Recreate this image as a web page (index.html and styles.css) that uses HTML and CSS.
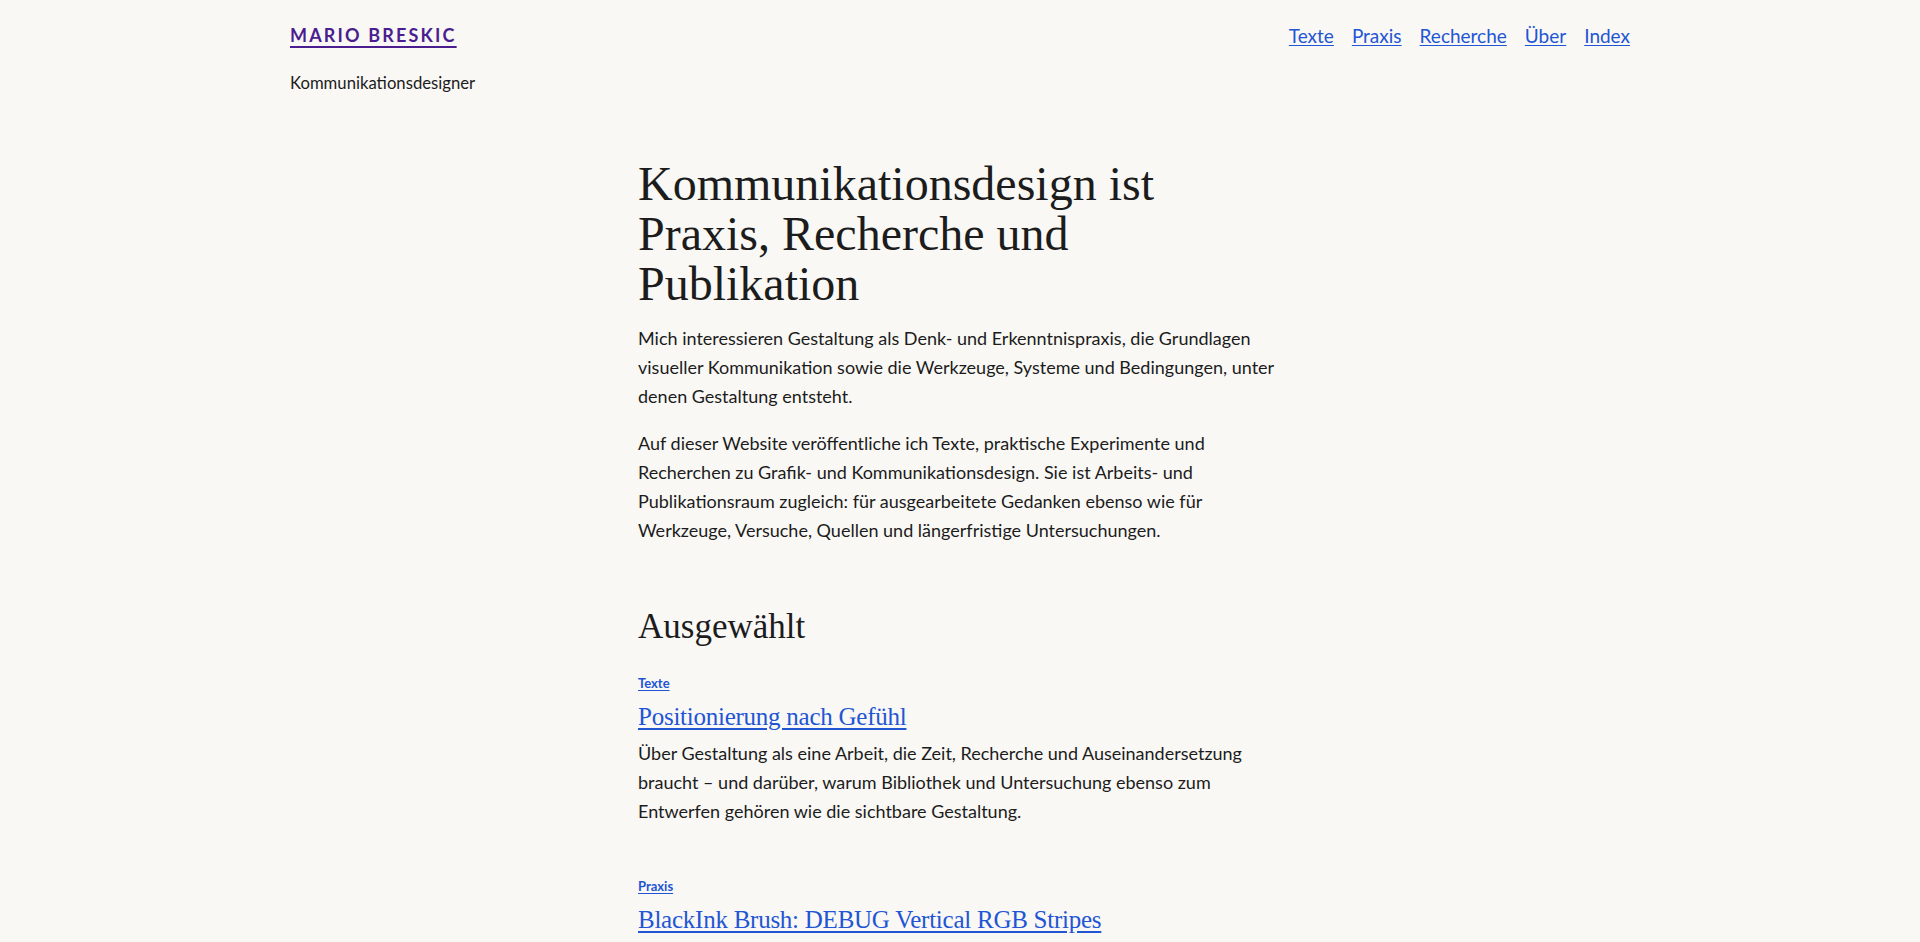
FILE: index.html
```html
<!DOCTYPE html>
<html lang="de">
<head>
<meta charset="utf-8">
<title>Mario Breskic – Kommunikationsdesigner</title>
<link rel="stylesheet" href="styles.css">
</head>
<body>
<header class="site-header">
  <div class="brand">
    <a class="logo" href="#">Mario Breskic</a>
    <p class="tagline">Kommunikationsdesigner</p>
  </div>
  <nav class="main-nav">
    <a href="#">Texte</a>
    <a href="#">Praxis</a>
    <a href="#">Recherche</a>
    <a href="#">Über</a>
    <a href="#">Index</a>
  </nav>
</header>
<main class="content">
  <h1 class="hero-title">Kommunikationsdesign ist Praxis, Recherche und Publikation</h1>
  <p class="text">Mich interessieren Gestaltung als Denk- und Erkenntnispraxis, die Grundlagen visueller Kommunikation sowie die Werkzeuge, Systeme und Bedingungen, unter denen Gestaltung entsteht.</p>
  <p class="text">Auf dieser Website veröffentliche ich Texte, praktische Experimente und Recherchen zu Grafik- und Kommunikationsdesign. Sie ist Arbeits- und Publikationsraum zugleich: für ausgearbeitete Gedanken ebenso wie für Werkzeuge, Versuche, Quellen und längerfristige Untersuchungen.</p>
  <h2 class="section-title">Ausgewählt</h2>
  <article class="entry">
    <a class="entry-cat" href="#">Texte</a>
    <h3 class="entry-title"><a href="#">Positionierung nach Gefühl</a></h3>
    <p class="text entry-desc">Über Gestaltung als eine Arbeit, die Zeit, Recherche und Auseinandersetzung braucht – und darüber, warum Bibliothek und Untersuchung ebenso zum Entwerfen gehören wie die sichtbare Gestaltung.</p>
  </article>
  <article class="entry">
    <a class="entry-cat" href="#">Praxis</a>
    <h3 class="entry-title"><a href="#">BlackInk Brush: DEBUG Vertical RGB Stripes</a></h3>
  </article>
</main>
</body>
</html>
```
FILE: styles.css
```css
html, body {
  margin: 0;
  padding: 0;
}
body {
  background: #f9f8f5;
  color: #1c1c1c;
  font-family: Lato, "Open Sans", sans-serif;
  font-size: 18px;
}
a {
  color: #2255d4;
}
.site-header {
  width: 1340px;
  margin: 0 auto;
  padding-top: 24px;
  display: flex;
  justify-content: space-between;
  align-items: flex-start;
}
.brand {
  display: flex;
  flex-direction: column;
  align-items: flex-start;
  padding-top: 1px;
}
.logo {
  color: #4b1d8f;
  font-weight: 700;
  font-size: 18px;
  line-height: 20px;
  letter-spacing: 0.12em;
  text-transform: uppercase;
  text-decoration-thickness: 2px;
  text-underline-offset: 4px;
}
.tagline {
  margin: 28px 0 0;
  font-size: 16.7px;
  line-height: 20px;
}
.main-nav {
  display: flex;
  gap: 18px;
  font-size: 19px;
  line-height: 23px;
}
.main-nav a {
  text-underline-offset: 2px;
}
.content {
  width: 644px;
  margin: 0 auto;
  padding-top: 66px;
}
.hero-title {
  font-family: "Liberation Serif", serif;
  font-weight: 400;
  font-size: 48px;
  line-height: 50px;
  margin: 0 0 15px;
}
.text {
  font-size: 18px;
  line-height: 29px;
  margin: 0 0 18px;
}
.section-title {
  font-family: "Liberation Serif", serif;
  font-weight: 400;
  font-size: 35px;
  line-height: 43px;
  margin: 60px 0 26px;
}
.entry {
  display: flex;
  flex-direction: column;
  align-items: flex-start;
  margin-bottom: 51px;
}
.entry-cat {
  font-size: 13px;
  font-weight: 700;
  line-height: 18px;
  text-underline-offset: 2px;
}
.entry-title {
  font-family: "Liberation Serif", serif;
  font-weight: 400;
  font-size: 25px;
  line-height: 32px;
  letter-spacing: -0.01em;
  margin: 9px 0 6px;
}
.entry-title a {
  text-underline-offset: 3px;
}
.entry-desc {
  margin: 0;
}
```
